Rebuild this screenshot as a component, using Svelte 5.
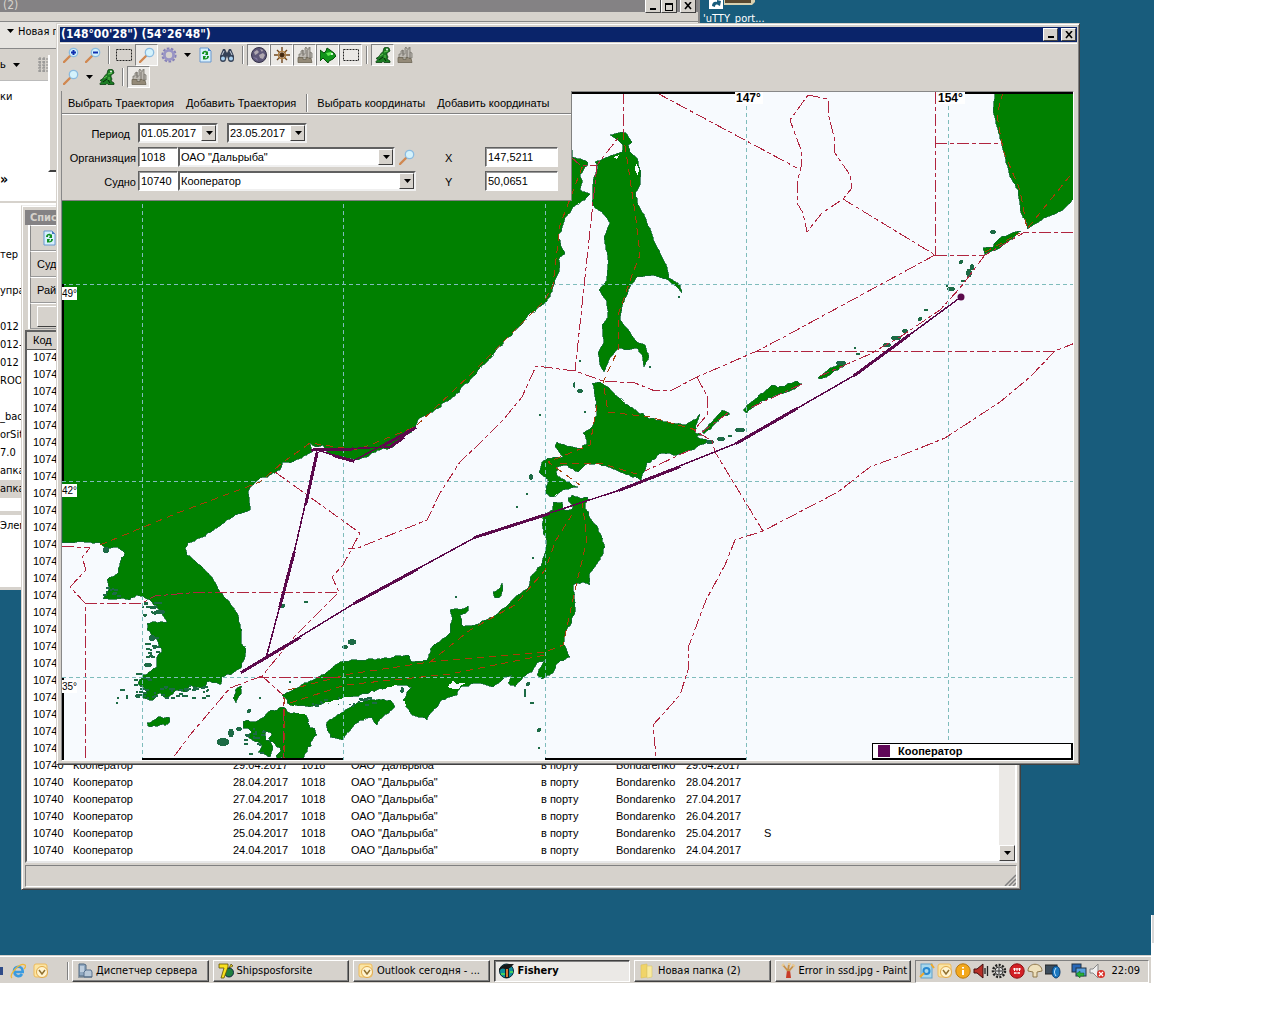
<script>
  const vessels = [];
  for (let i = 0; i < 30; i++) {
    const d = new Date(Date.UTC(2017, 4, 23 - i));
    const date = `${String(d.getUTCDate()).padStart(2, '0')}.${String(d.getUTCMonth() + 1).padStart(2, '0')}.2017`;
    vessels.push({ date, mark: date === '25.04.2017' ? 'S' : '' });
  }

  const folders = ['тер', '', 'упра', '', '012', '012-д', '012', 'ROOT', '', '_bac', 'orSit', '7.0', 'апка', 'апка'];

  const tasks = [
    { icon: 'server', text: 'Диспетчер сервера' },
    { icon: 'seven', text: 'Shipsposforsite' },
    { icon: 'outlook', text: 'Outlook сегодня - ...' },
    { icon: 'fishery', text: 'Fishery', active: true },
    { icon: 'folder', text: 'Новая папка (2)' },
    { icon: 'paint', text: 'Error in ssd.jpg - Paint' }
  ];

  const tools = [
    ['zoomin', 'Увеличить'], ['zoomout', 'Уменьшить'], ['sep'], ['rect', 'Выделить'],
    ['lens', 'Поиск', true], ['gear', 'Настройки'], ['drop', 'Ещё'], ['doc', 'Обновить'], ['binoc', 'Найти'], ['sep'],
    ['globe', 'Глобус', true], ['compass', 'Компас', true], ['city', 'Порты', true], ['fish', 'Рыба', true], ['rect', 'Районы', true],
    ['sep'], ['frog', 'Суда', true], ['city', 'Порт']
  ];
  const tools2 = [['lens', 'Лупа'], ['drop', 'Ещё'], ['frog', 'Суда'], ['sep'], ['city', 'Порты', true]];
  const tray = ['sync', 'outlook', 'info', 'sound', 'cog', 'red', 'mushroom', 'monitor', 'gap', 'net', 'mute'];

  // Breaks straight coast segments into small irregular steps.
  let seed = 7;
  const rnd = () => {
    seed = (seed * 16807) % 2147483647;
    return seed / 2147483647 - 0.5;
  };
  function coast(text, amp = 2) {
    const p = text.trim().split(/\s+/).map((s) => s.split(',').map(Number));
    let out = '';
    p.forEach((a, i) => {
      const b = p[(i + 1) % p.length];
      const len = Math.hypot(b[0] - a[0], b[1] - a[1]);
      const n = len > 90 ? 1 : Math.max(1, Math.round(len / 3));
      for (let k = 0; k < n; k++) {
        const j = k ? amp : 0;
        out += `${i || k ? 'L' : 'M'}${(a[0] + ((b[0] - a[0]) * k) / n + rnd() * j).toFixed(1)} ${(a[1] + ((b[1] - a[1]) * k) / n + rnd() * j).toFixed(1)}`;
      }
    });
    return out + 'Z';
  }

  const lands = [
    coast('62,150 572,150 572,157 583,160 588,163 585,167 583,171 580,175 582,183 580,190 590,194 585,200 573,207 565,218 562,228 558,238 562,248 565,254 560,257 559,270 555,283 550,297 545,303 530,313 520,326 505,340 495,352 487,362 480,368 470,380 455,396 445,402 433,412 420,418 415,428 403,438 390,448 377,450 370,455 357,460 337,457 327,453 323,445 316,447 310,443 312,452 302,458 290,463 282,462 280,470 270,475 258,480 248,492 250,510 233,517 217,528 203,537 188,543 185,548 187,555 200,565 212,577 220,592 230,603 238,615 242,630 241,643 246,648 242,667 233,673 222,677 221,684 207,682 203,689 190,685 187,692 176,690 167,698 160,693 153,700 143,698 146,690 138,683 143,675 157,667 157,657 162,652 157,640 147,630 147,623 167,622 160,610 150,600 137,595 130,600 123,598 103,599 110,588 107,580 118,573 120,563 125,553 117,547 107,550 100,543 90,542 77,542 62,543'),
    coast('610,135 622,132 627,134 632,142 628,145 630,152 637,158 641,173 640,185 636,192 637,202 645,217 655,243 667,267 669,278 680,285 682,293 678,288 668,280 653,275 637,277 630,287 622,307 620,320 630,332 637,342 645,345 649,357 644,367 642,355 637,348 627,350 618,348 610,358 604,372 600,365 598,353 604,342 602,325 608,317 607,302 599,290 607,280 608,260 604,237 610,223 602,212 592,205 593,180 598,167 595,162 608,157 622,152 623,145 618,140', 1),
    coast('592,383 600,382 613,392 630,407 647,417 667,422 683,425 693,420 700,414 697,423 695,432 702,435 697,437 712,442 700,445 692,450 677,455 663,453 647,463 641,480 623,473 608,467 597,463 585,465 578,472 567,465 557,467 557,475 567,482 578,487 563,490 552,497 545,493 548,480 539,472 542,462 548,458 563,457 555,447 557,442 567,446 582,448 587,442 583,433 592,427 597,413 595,397'),
    coast('553,502 562,502 565,510 573,508 568,498 572,495 580,498 588,497 585,505 590,518 598,528 605,547 600,560 590,573 590,585 583,582 573,585 575,607 572,622 565,632 563,643 570,657 558,663 553,673 542,679 537,675 545,660 537,663 532,672 523,677 515,687 508,683 512,675 505,677 493,687 477,683 460,688 457,695 442,700 432,712 427,720 412,715 403,702 407,692 412,687 400,685 377,690 360,695 340,700 323,703 310,707 290,705 282,695 297,688 313,680 327,672 340,662 357,660 387,658 408,655 412,662 427,660 432,647 450,633 452,617 450,610 462,609 468,606 468,611 460,615 462,625 470,626 493,617 512,600 528,588 530,577 542,563 547,543 543,533 543,515 553,510'),
    coast('327,722 335,717 343,712 357,703 370,700 390,700 395,707 383,717 377,725 372,718 360,720 352,728 343,740 330,737 327,728'),
    coast('243,722 248,720 255,722 267,713 282,707 290,713 307,713 307,723 317,735 308,747 303,759 277,759 280,748 270,742 272,734 263,730 266,740 273,747 268,757 258,752 262,745 256,742 248,737 252,732 243,728', 4),
    coast('995,92 993,110 998,130 1003,150 1010,177 1018,190 1021,213 1027,223 1027,229 1047,217 1063,210 1075,198 1075,92', 1),
    coast('983,248 993,247 1000,238 1010,234 1021,231 1010,240 1000,248 985,255'),
    coast('702,431 712,422 722,410 730,414 720,418 712,427 704,434'),
    coast('743,410 757,398 772,385 778,388 797,381 802,384 790,391 777,395 760,402 747,413'),
    coast('818,378 830,368 845,362 845,365 830,375 820,379'),
    coast('493,592 500,588 502,583 503,590 501,596 495,598'),
    coast('237,688 242,686 241,694 236,703 233,698'),
    coast('147,723 158,717 170,718 168,724 150,727')
  ];
  const waters = [
    coast('289,707 300,706 318,708 332,706 338,709 326,716 318,722 308,716 296,713'),
    coast('383,689 396,685 401,688 396,696 385,694'),
    coast('448,687 453,679 456,684 466,683 458,689'),
    coast('322,703 334,700 350,697 360,701 344,705'),
    coast('636,163 639,169 638,176 635,170', 0),
    coast('613,157 619,155 617,159', 0),
    coast('397,702 405,701 406,706 400,709')
  ];
  // cx, cy, rx, ry
  const islets = [
    [352, 642, 4, 3], [345, 647, 3, 2], [283, 606, 2, 2], [531, 477, 2, 3], [580, 391, 3, 2], [574, 385, 1, 3], [580, 361, 1, 1],
    [740, 430, 5, 2], [721, 439, 4, 2], [710, 442, 4, 2], [730, 436, 2, 1], [993, 232, 3, 2], [961, 262, 2, 2], [969, 273, 3, 4], [972, 267, 2, 3],
    [963, 281, 2, 1], [951, 289, 4, 2], [947, 286, 1, 1], [926, 310, 2, 1], [920, 319, 2, 2], [905, 331, 3, 2], [896, 338, 5, 2], [887, 345, 4, 2],
    [858, 354, 2, 1], [855, 348, 1, 1], [841, 363, 5, 2], [528, 684, 2, 2], [525, 693, 1, 4], [532, 703, 2, 1], [539, 730, 2, 2], [539, 748, 1, 1],
    [527, 494, 1, 1], [533, 558, 1, 1], [517, 507, 1, 1], [456, 597, 1, 1], [540, 415, 1, 1], [585, 412, 1, 1], [223, 742, 6, 4], [231, 733, 3, 4],
    [239, 729, 3, 2], [249, 711, 2, 2], [118, 698, 1, 1], [122, 690, 3, 1], [127, 697, 1, 2], [117, 703, 1, 1], [260, 698, 1, 1], [150, 607, 5, 1],
    [158, 603, 4, 1], [160, 612, 5, 2], [146, 603, 2, 1], [152, 638, 3, 3], [155, 647, 2, 2], [148, 665, 4, 2], [106, 550, 3, 3], [290, 682, 1, 1],
    [402, 690, 2, 3], [650, 367, 1, 1], [679, 297, 1, 1]
  ];
  // Small skerries: centre, spread, count
  for (const [x, y, w, h, n] of [[143, 685, 14, 26, 22], [180, 692, 60, 12, 34], [153, 610, 20, 16, 14], [152, 648, 12, 24, 14], [340, 702, 70, 8, 30], [256, 742, 20, 26, 16], [308, 600, 6, 4, 1], [112, 592, 14, 10, 9]]) {
    for (let i = 0; i < n; i++) islets.push([Math.round(x + rnd() * w), Math.round(y + rnd() * h), 1 + Math.round(Math.abs(rnd()) * 3), 1]);
  }
  const zones = [
    'M623 92V133', 'M657 93L797 168', 'M808 95L828 99L829 117L834 137L835 153L850 175L852 188L843 199L822 213L807 232L803 213L797 203V183L802 163L801 150L790 120Z',
    'M843 199L935 255M935 92V255M935 143H1003M935 255H985L1025 232H1075',
    'M935 255L782 338L757 351L697 377L672 390L655 391L635 383L603 381L575 371L536 366L522 397L503 420L480 443L460 462L440 493L427 520L358 548L348 549',
    'M275 472L360 533L343 565L332 577L339 592L295 636L262 676L283 695L284 758',
    'M757 351H1055M1075 343L1055 351L1030 377L1000 402L945 438L910 452L870 467L838 492L763 531L735 540L725 565L706 600L688 648V670L680 695L653 725L656 757',
    'M697 377L708 398L707 415L694 430L712 441L715 452L763 531',
    'M597 165L575 371M571 157L580 165H597L618 138',
    'M85 758V603L70 587L86 570L82 557L90 548L62 546M85 603H142L155 596L200 592H339',
    'M257 677H340M262 676L230 688L190 735L173 758',
    'M985 255L960 288L940 310L900 337L870 354L820 376M802 384L750 408M728 413L702 432M690 450L645 471'
  ];
  const inland = [
    'M100 545L180 512L260 482L282 463L310 443L357 450L415 427L470 375L545 300L553 285L560 225L583 165',
    'M623 133L628 165L636 220L640 255L632 275L618 315L619 348L603 382L608 412L650 417L696 430',
    'M597 405L590 445L548 462L580 485M560 463L600 463L640 475',
    'M288 690L350 674L430 662L545 652L563 645L575 590L587 540L582 500',
    'M430 662L470 630L515 605L545 570L556 540L575 510',
    'M290 703L345 685L450 674L545 655',
    'M284 697L285 758M1003 92L997 115L1003 150L1020 190L1027 229L1073 172M985 252L1020 233'
  ];
  const track = [
    [961, 297, 855, 375], [855, 375, 737, 443], [737, 443, 620, 490], [620, 490, 476, 537], [476, 537, 355, 603], [355, 603, 242, 672],
    [266, 658, 294, 553], [294, 553, 317, 453], [317, 450, 353, 461], [353, 461, 415, 428], [415, 428, 390, 447], [390, 447, 313, 450]
  ];
  const mid = (a, b, t) => Math.round(a + (b - a) * t);
</script>

{#snippet icon(name)}
  <svg class="icon" viewBox="0 0 16 16" aria-hidden="true">
    {#if name === 'zoomin' || name === 'zoomout' || name === 'lens'}
      <path d="M1 15L7 9" stroke="#d08850" stroke-width="2.4" stroke-linecap="round" />
      <circle cx="10.5" cy="5.5" r="4.2" fill="#d4f2fc" stroke="#8bbbe0" stroke-width="1.3" />
      {#if name === 'zoomin'}<path d="M8 5.5h5M10.5 3v5" stroke="#1030b0" stroke-width="2" />{/if}
      {#if name === 'zoomout'}<path d="M8 5.5h5" stroke="#1030b0" stroke-width="2" />{/if}
    {:else if name === 'rect'}
      <rect x=".5" y="2.500" width="15" height="11" fill="none" stroke="#222" stroke-dasharray="2 1" />
    {:else if name === 'gear'}
      <circle cx="8" cy="8" r="6.6" fill="none" stroke="#8580b8" stroke-width="2" stroke-dasharray="2.6 1.5" />
      <circle cx="8" cy="8" r="4.6" fill="none" stroke="#9894c4" stroke-width="2.8" />
    {:else if name === 'doc'}
      <path d="M3 1h8l3 3v11H3z" fill="#d8f0fc" stroke="#6898d0" /><path d="M11 1v3h3z" fill="#4878c0" />
      <path d="M5 7c0-4 5-4 5-2l1-1v4H8l1-2c-1-1-2-1-2 1zM12 9c0 4-5 4-5 3l-1 1V9h3l-1 2c2 1 2-1 2-2z" fill="#109020" />
    {:else if name === 'binoc'}
      <path d="M4 2h2l2 4 2-4h2l3 7v3a3 3 0 0 1-6 0l-1-3-1 3a3 3 0 0 1-6 0V9z" fill="#354258" />
      <circle cx="4" cy="11.5" r="2" fill="#a8d0f0" /><circle cx="12" cy="11.5" r="2" fill="#a8d0f0" />
      <path d="M5 4l-2 4M11 4l2 4" stroke="#c8d0dc" />
    {:else if name === 'globe'}
      <circle cx="8" cy="8" r="7.5" fill="#5e5878" stroke="#333048" />
      <path d="M3 5l3-2 2 2-2 2-2 1zM8 8l4-2 2 2-2 4-3-1zM9 2l3 1-1 2z" fill="#b0a8b0" />
      <path d="M2 10l4 1 1 3z" fill="#8078a0" />
    {:else if name === 'compass'}
      <path d="M8 0v16M0 8h16M3 3l10 10M13 3L3 13" stroke="#70451c" stroke-width="1.4" />
      <circle cx="8" cy="8" r="4" fill="none" stroke="#b88848" /><circle cx="8" cy="8" r="2" fill="#402810" />
    {:else if name === 'city'}
      <path d="M2 11V7h2V4l2-1v4h2V1l1-1 1 2h2V0h1v5l2 1v5z" fill="#bdb9b2" stroke="#77736c" stroke-width=".8" />
      <path d="M1 15.500v-5h5v2h3v-2h2l1 1h2l1 4z" fill="#948a78" stroke="#6c6454" stroke-width=".8" /><path d="M6 3v6M10 3v7M13 5v6" stroke="#76726c" />
    {:else if name === 'fish'}
      <path d="M0 3l4 3 2-2 1-3 3 2 4 3 2 3-3 3-4 2-1 2-2-2-3-3-3 3z" fill="#11951b" stroke="#034d08" />
      <path d="M6 6l5-1 2 2-5 2z" fill="#60e850" /><circle cx="12" cy="7" r="1" fill="#fff" />
    {:else if name === 'frog'}
      <path d="M9 1l2-1 3 1 1 3-3 2 0 2 1 2-1 2 3 2v1.500H9l-1-1-1 1H1v-1l2-2-2-1 3-2 2-3 2-2z" fill="#1b7d22" stroke="#0a3c10" stroke-width=".8" />
      <path d="M9 5l4-1M5 9l3-2M10 8v3" stroke="#62c452" /><circle cx="12" cy="2.500" r=".9" fill="#fff" /><path d="M4 13l4-3M9 11l2 3" stroke="#052808" />
    {:else if name === 'drop'}
      <path d="M5 6h7l-3.500 4z" fill="#000" />
    {:else if name === 'server'}
      <path d="M2 1h5l2 1v11H2z" fill="#90a8c0" stroke="#506880" /><path d="M3 4h4M3 6h4M3 8h4" stroke="#e8f0f8" />
      <path d="M7 9l2-2h5l1 2v5H7z" fill="#b8c8d8" stroke="#58708c" /><path d="M1 14h14" stroke="#506880" />
    {:else if name === 'seven'}
      <circle cx="11" cy="9.500" r="4.500" fill="#208040" stroke="#102840" />
      <path d="M1 1h9v3L6 15H3L6 5H1z" fill="#f8e020" stroke="#605000" stroke-width=".8" /><path d="M11 5l2-4 2 2z" fill="#e8d020" stroke="#302800" stroke-width=".6" />
    {:else if name === 'outlook'}
      <rect x="1" y="1" width="13" height="13" rx="2" fill="#fbe5a4" stroke="#eebb5c" />
      <circle cx="9" cy="9" r="5.500" fill="#fff4d0" stroke="#e0a848" /><path d="M6 7l3 4 3-4" fill="none" stroke="#907030" stroke-width="1.500" />
    {:else if name === 'fishery'}
      <circle cx="7.500" cy="8" r="7" fill="#0b8f9c" stroke="#082838" />
      <path d="M0 6c5-6 9-5 15-5l-4 4h-1v10H6V6c-2-1-4-1-6 2z" fill="#181818" /><path d="M7 6h2v8H7z" fill="#d87838" /><path d="M2 11h4M11 9h3" stroke="#40d060" stroke-width="2" />
    {:else if name === 'folder'}
      <path d="M2 2l6-1v13l-6 1z" fill="#f0d468" stroke="#dcc058" stroke-width=".6" /><path d="M8 3h5v11l-5 1z" fill="#f8eaa0" stroke="#dcc868" stroke-width=".6" />
    {:else if name === 'paint'}
      <path d="M7 7h3l1 8H6z" fill="#c83c28" /><path d="M8 8L3 2M8 8l1-7M9 8l5-6" stroke="#c89048" stroke-width="1.800" /><path d="M2 3l2-2M8 1h3M12 2l3 1" stroke="#e8c890" stroke-width="2" />
    {:else if name === 'ie'}
      <path d="M14 9H4.500a4 4 0 0 0 7.500 2" fill="none" stroke="#3a9be0" stroke-width="2.600" /><path d="M4 8a4.300 4.300 0 0 1 8.600 0" fill="none" stroke="#3a9be0" stroke-width="2.600" />
      <path d="M2 15C-2 12 10-1 15 2c1 1 0 3-1 4" fill="none" stroke="#f0b838" stroke-width="1.300" />
    {:else if name === 'sync'}
      <rect x="2" y="1" width="11" height="14" fill="#a8d8ec" stroke="#60a0c8" /><circle cx="7.500" cy="8" r="3" fill="none" stroke="#2888d0" stroke-width="2" /><path d="M1 14l4-4M12 1l3 4" stroke="#f0a828" stroke-width="2" />
    {:else if name === 'info'}
      <circle cx="8" cy="8" r="7.200" fill="#f3a81c" stroke="#b87810" /><path d="M8 7v5M8 4v1.500" stroke="#fff" stroke-width="2" />
    {:else if name === 'sound'}
      <path d="M1 6h3l6-5v14l-6-5H1z" fill="#b83028" stroke="#401010" /><path d="M12 5v6M14.500 3v10" stroke="#222" stroke-width="1.300" />
    {:else if name === 'cog'}
      <circle cx="8" cy="8" r="6" fill="none" stroke="#222" stroke-width="2.500" stroke-dasharray="2 1.400" /><circle cx="8" cy="8" r="4" fill="#ddd" stroke="#333" /><path d="M8 5v6M5 8h6" stroke="#333" />
    {:else if name === 'red'}
      <circle cx="8" cy="8" r="7.200" fill="#d32026" stroke="#8c1014" /><path d="M4 6h8M5 10h6M5.500 5v3M8 5v3M10.500 5v3M6 9v2M10 9v2" stroke="#fff" />
    {:else if name === 'mushroom'}
      <path d="M1 8c0-9 14-9 14 0l-5 1v5H6V9z" fill="#eee0bc" stroke="#90784c" />
    {:else if name === 'monitor'}
      <rect x="0" y="2" width="12" height="9" fill="#3c4c5c" stroke="#222" /><ellipse cx="11" cy="9" rx="4" ry="6" fill="#1c78c0" stroke="#0c3c70" /><path d="M11 5c-2 3-2 5 0 8" stroke="#c8e8ff" fill="none" />
    {:else if name === 'net'}
      <rect x="1" y="1" width="9" height="8" fill="#2868b8" stroke="#234" /><rect x="5" y="5" width="10" height="8" fill="#58a0e0" stroke="#234" /><path d="M5 11l4-3v2h4v3H9v2z" fill="#28b038" stroke="#0c5c18" stroke-width=".5" />
    {:else if name === 'mute'}
      <path d="M1 6h3l5-5v14l-5-5H1z" fill="#eee" stroke="#888" /><circle cx="12" cy="11" r="4" fill="#d83028" /><path d="M10 9l4 4M14 9l-4 4" stroke="#fff" stroke-width="1.300" />
    {/if}
  </svg>
{/snippet}

{#snippet toolrow(list)}
  <div class="toolrow">
    {#each list as [name, label, on]}
      {#if name === 'sep'}
        <span class="sep"></span>
      {:else}
        <button class="tool" class:on class:narrow={name === 'drop'} aria-label={label}>{@render icon(name)}</button>
      {/if}
    {/each}
  </div>
{/snippet}

{#snippet combo(id, label, value)}
  <span class="combo">
    <select {id} aria-label={label}><option>{value}</option></select>
    <span class="arrow">{@render icon('drop')}</span>
  </span>
{/snippet}

<div class="screen">
  <main class="desktop">
    <div class="shortcut">
      <svg viewBox="0 0 46 12" aria-hidden="true"><path d="M15 0h31v2l-3 3H15z" fill="#d8d0b0" /><path d="M16 0h26v3H16z" fill="#5a4830" /><path d="M0 0h14v9H0z" fill="#fff" /><path d="M3 6c0-4 3-5 5-4V0l4 1-1 5-2-1c-2-1-3 0-3 2z" fill="#185c7c" /></svg>
      <span>'uTTY_port...</span>
    </div>

    <section class="explorer">
      <header class="graybar"><span>(2)</span>
        <span class="winbtns"><button aria-label="Свернуть"><i class="min"></i></button><button aria-label="Развернуть"><i class="max"></i></button><button aria-label="Закрыть окно"><svg viewBox="0 0 8 8" aria-hidden="true"><path d="M1 0l6 7M7 0L1 7" stroke="#000" stroke-width="1.600" /></svg></button></span>
      </header>
      <div class="address">{@render icon('drop')}<span>Новая г</span></div>
      <div class="exbar"><span>ь</span>{@render icon('drop')}
        <svg class="lines" viewBox="0 0 14 16" aria-hidden="true"><path d="M2 0v16M6 0v16M0 2h14M0 5h14M0 8h14M0 11h14M0 14h14" stroke="#888" stroke-dasharray="3 1" /></svg>
      </div>
      <div class="side top"><span>ки</span><b>»</b></div>
      <div class="side list">
        {#each folders as f, i}<span class:picked={i === 13}>{f}</span>{/each}
      </div>
      <div class="side foot"><span>Элем</span></div>
    </section>

    <section class="behind"></section>

    <section class="register">
      <header class="graybar">Спис</header>
      <div class="band">{@render icon('doc')}</div>
      <div class="band">Суд</div>
      <div class="band">Рай</div>
      <div class="band"><button class="blank" aria-label="Фильтр"></button></div>
      <div class="grid">
        <table>
          <thead><tr><th class="c1">Код</th><th class="c2">Судно</th><th class="c3">Дата</th><th class="c4">Код</th><th class="c5">Организация</th><th class="c6">Район</th><th class="c7">Автор</th><th class="c8">Дата</th><th></th></tr></thead>
          <tbody>
            {#each vessels as v}
              <tr><td>10740</td><td>Кооператор</td><td>{v.date}</td><td>1018</td><td>ОАО "Дальрыба"</td><td>в порту</td><td>Bondarenko</td><td>{v.date}</td><td>{v.mark}</td></tr>
            {/each}
          </tbody>
        </table>
        <div class="scroll"><button aria-label="Вниз">{@render icon('drop')}</button></div>
      </div>
      <footer class="status"><svg viewBox="0 0 12 12" aria-hidden="true"><path d="M1 12L12 1M5 12l7-7M9 12l3-3" stroke="#808080" stroke-width="1.500" /></svg></footer>
    </section>

    <section class="fishery">
      <header class="titlebar"><span>(148°00'28") (54°26'48")</span>
        <span class="winbtns"><button aria-label="Свернуть карту"><i class="min"></i></button><button aria-label="Закрыть карту"><svg viewBox="0 0 8 8" aria-hidden="true"><path d="M1 0l6 7M7 0L1 7" stroke="#000" stroke-width="1.600" /></svg></button></span>
      </header>
      <div class="toolbars">
        {@render toolrow(tools)}
        {@render toolrow(tools2)}
      </div>
      <div class="mapbox">
        <svg class="map" viewBox="62 92 1013 668" preserveAspectRatio="xMinYMin slice" role="img" aria-label="Карта траектории судна">
          <rect x="62" y="92" width="1013" height="668" fill="#f7fafe" />
          <g shape-rendering="crispEdges">
            <g fill="#008000" stroke="#14673a" stroke-width=".7">
              {#each lands as d}<path {d} />{/each}
            </g>
            <g fill="#1c6a45">{#each islets as [cx, cy, rx, ry]}<ellipse {cx} {cy} {rx} {ry} />{/each}</g>
            <g fill="#f7fafe">{#each waters as d}<path {d} />{/each}</g>
            <path d="M142.500 92V760M343.500 92V760M545.500 92V760M746.500 92V760M948.500 92V760M62 284.500H1075M62 481.500H1075M62 677.500H1075" stroke="#7fbcbc" stroke-dasharray="4 3" fill="none" />
            <g class="zone">{#each zones as d}<path {d} />{/each}</g>
            <g class="zone land">{#each inland as d}<path {d} />{/each}</g>
            <path d="M62 93H736M965 93H1075M63 284V481M63 678V760M1074 284V481M1074 678V760M142 759H343M545 759H746M948 759H1075" stroke="#000" stroke-width="2" fill="none" />
          </g>
          <g stroke="#5c0a4c" stroke-linecap="square" shape-rendering="crispEdges">
            {#each track as [x1, y1, x2, y2]}
              <line {x1} {y1} {x2} {y2} stroke-width="1.500" />
              <line x1={x2} y1={y2} x2={mid(x2, x1, 0.5)} y2={mid(y2, y1, 0.5)} stroke-width="3" />
            {/each}
          </g>
          <circle cx="961" cy="297" r="3.500" fill="#5c0a4c" />
          <g fill="#fff"><rect x="62" y="287" width="15" height="13" /><rect x="62" y="484" width="15" height="13" /><rect x="62" y="680" width="15" height="13" /><rect x="735" y="92" width="28" height="12" /><rect x="938" y="92" width="27" height="12" /></g>
          <g class="deg"><text x="62" y="297">49°</text><text x="62" y="494">42°</text><text x="62" y="690">35°</text></g>
          <g class="deg bold"><text x="736" y="102">147°</text><text x="938" y="102">154°</text></g>
        </svg>

        <form class="panel" onsubmit={(e) => e.preventDefault()}>
          <div class="links">
            <button>Выбрать Траектория</button><button>Добавить Траектория</button><span class="sep"></span><button>Выбрать координаты</button><button>Добавить координаты</button>
          </div>
          <div class="fields">
            <label class="near" for="from">Период</label>
            <div class="dates">{@render combo('from', 'Начало периода', '01.05.2017')}{@render combo('to', 'Конец периода', '23.05.2017')}</div>
            <span></span><span></span>
            <label for="org">Организяция</label>
            <div class="pair org"><input id="org" value="1018" />{@render combo('orgname', 'Название организации', 'ОАО "Дальрыба"')}<button class="find" aria-label="Найти организацию">{@render icon('lens')}</button></div>
            <label class="xy" for="x">X</label><input class="coord" id="x" value="147,5211" />
            <label for="ship">Судно</label>
            <div class="pair"><input id="ship" value="10740" />{@render combo('shipname', 'Название судна', 'Кооператор')}</div>
            <label class="xy" for="y">Y</label><input class="coord" id="y" value="50,0651" />
          </div>
        </form>
        <div class="legend"><i></i><b>Кооператор</b></div>
      </div>
    </section>
    <div class="edge"></div>
  </main>

  <nav class="taskbar">
    <div class="quick"><i></i>{@render icon('ie')}{@render icon('outlook')}</div>
    <span class="sep"></span>
    <div class="tasks">
      {#each tasks as t}<button class:active={t.active}>{@render icon(t.icon)}<span>{t.text}</span></button>{/each}
    </div>
    <div class="tray">
      {#each tray as t}{#if t === 'gap'}<span class="gap"></span>{:else}{@render icon(t)}{/if}{/each}
      <time>22:09</time>
    </div>
  </nav>
</div>

<style>
  :global(body) { background: #fff; overflow-x: hidden; }
  .screen, .screen * { box-sizing: border-box; }
  .screen {
    width: calc(100% - 126px);
    font: 11px/13px 'Liberation Sans', sans-serif;
    color: #000;
  }
  button, input, select { font: inherit; color: inherit; border-radius: 0; padding: 0; margin: 0; }
  button { background: none; border: 0; }
  .icon { width: 16px; height: 16px; flex: none; fill: none; display: block; }
  .desktop { position: relative; height: calc(100vh - 69px); min-height: 900px; background: #185c7c; overflow: hidden; }
  .shortcut { position: absolute; left: 703px; top: 0; color: #fff; font: 11px/13px 'DejaVu Sans Condensed', sans-serif; }
  .shortcut svg { width: 46px; height: 12px; display: block; margin-left: 6px; }
  .edge { position: absolute; right: 0; bottom: 0; width: 3px; height: 40px; border-bottom: 12px solid #fff; border-left: 1px solid #fff; background: #d8d8d8; }

  .explorer { position: absolute; left: 0; top: 0; width: 700px; height: 590px; background: #d6d2cc; border-right: 2px solid #888; border-bottom: 2px solid #d6d2cc; display: flex; flex-direction: column; }
  .graybar { background: #848284; color: #d6d2cc; font: bold 11px/13px 'DejaVu Sans Condensed', sans-serif; }
  .explorer .graybar { height: 14px; padding: 0 2px 0 3px; font-weight: normal; font-size: 12px; line-height: 11px; display: flex; justify-content: space-between; border-bottom: 2px solid #d6d2cc; flex: none; }
  .winbtns { display: flex; align-items: center; }
  .winbtns button { width: 16px; height: 14px; background: #d6d2cc; border: 1px solid; border-color: #fff #404040 #404040 #fff; display: flex; align-items: end; justify-content: center; }
  .winbtns button:last-child { margin-left: 3px; align-items: center; }
  .winbtns svg { width: 8px; height: 8px; }
  .min { width: 6px; height: 2px; background: #000; margin-bottom: 2px; }
  .max { width: 8px; height: 8px; border: 1px solid #000; border-top-width: 2px; margin-bottom: 1px; }
  .address { height: 28px; margin-top: 7px; border-top: 1px solid #888; border-bottom: 1px solid #888; background: #e6e4e0; display: flex; align-items: center; font: 11px/13px 'DejaVu Sans Condensed', sans-serif; }
  .explorer .address { padding-left: 2px; padding-bottom: 8px; flex: none; }
  .exbar { height: 32px; flex: none; display: flex; align-items: center; gap: 2px; border-bottom: 1px solid #bbb; }
  .lines { width: 14px; height: 16px; margin-left: 12px; }
  .side { background: #fff; width: 100%; font: 11px/18px 'DejaVu Sans Condensed', sans-serif; display: flex; flex-direction: column; white-space: nowrap; flex: none; }
  .side.top { height: 122px; padding-top: 7px; justify-content: space-between; padding-bottom: 13px; border-bottom: 2px solid #d6d2cc; }
  .side.top b { font-size: 14px; }
  .side.list { height: 308px; padding-top: 43px; }
  .side.list span { height: 18px; flex: none; }
  .side.list .picked { background: #d6d2cc; }
  .side.foot { height: 76px; border-top: 4px solid #d6d2cc; padding-top: 2px; }
  .behind { position: absolute; left: 48px; top: 55px; width: 60px; height: 117px; background: #d6d2cc; border-left: 2px solid #fff; border-bottom: 2px solid #404040; }

  .register { position: absolute; left: 21px; top: 205px; right: 133px; bottom: 65px; background: #d6d2cc; border: 1px solid; border-color: #eee #404040 #404040 #d6d2cc; box-shadow: inset 1px 1px #fff, inset -1px -1px #808080; padding: 4px 3px 2px; display: flex; flex-direction: column; }
  .register .graybar { height: 15px; padding-left: 5px; line-height: 15px; flex: none; }
  .band { height: 26px; flex: none; border-top: 1px solid #fff; border-bottom: 1px solid #999; margin-left: 5px; padding-left: 6px; display: flex; align-items: center; border-left: 1px solid #888; box-shadow: -2px 0 #fff; }
  .band .icon { margin-left: 4px; }
  .blank { width: 60px; height: 21px; border: 1px solid; border-color: #fff #404040 #404040 #fff; }
  .grid { flex: 1; min-height: 0; margin-top: 1px; display: flex; background: #fff; border: 2px solid; border-color: #606060 #fff #e8e8e8 #606060; overflow: hidden; align-items: stretch; }
  table { border-collapse: collapse; table-layout: fixed; width: 100%; align-self: flex-start; }
  th, td { height: 17px; padding: 0; text-align: left; font-weight: normal; white-space: nowrap; line-height: 13px; }
  th { background: #d6d2cc; border-bottom: 1px solid #555; }
  th:first-child, td:first-child { padding-left: 6px; }
  .c1 { width: 46px; } .c2 { width: 160px; } .c3 { width: 68px; } .c4 { width: 50px; } .c5 { width: 190px; } .c6 { width: 75px; } .c7 { width: 70px; } .c8 { width: 78px; }
  .scroll { width: 16px; flex: none; display: flex; align-items: flex-end; background: #ebe9e6; }
  .scroll button { width: 16px; height: 16px; background: #d6d2cc; border: 1px solid; border-color: #fff #404040 #404040 #fff; display: flex; align-items: center; justify-content: center; }
  .status { height: 22px; flex: none; margin-top: 2px; border: 1px solid; border-color: #808080 #fff #fff #808080; display: flex; justify-content: flex-end; align-items: flex-end; }
  .status svg { width: 12px; height: 12px; }

  .fishery { position: absolute; left: 56px; top: 23px; right: 74px; bottom: 190px; background: #d6d2cc; border: 1px solid; border-color: #d6d2cc #404040 #404040 #d6d2cc; box-shadow: inset 1px 1px #fff, inset -1px -1px #808080; padding: 3px 2px 3px 3px; display: flex; flex-direction: column; }
  .titlebar { height: 15px; flex: none; background: #0a246a; color: #fff; font: bold 12px/15px 'DejaVu Sans Condensed', sans-serif; display: flex; justify-content: space-between; padding-left: 1px; }
  .titlebar > span:first-child { white-space: pre; }
  .titlebar .winbtns { padding-right: 1px; }
  .titlebar .winbtns button { width: 15px; height: 13px; }
  .toolbars { margin-top: 1px; border-top: 1px solid #fff; height: 48px; flex: none; }
  .toolrow { display: flex; height: 22px; align-items: center; }
  .tool { width: 22px; height: 22px; flex: none; display: flex; align-items: center; justify-content: center; border: 1px solid transparent; }
  .tool.narrow { width: 14px; }
  .tool.on { width: 23px; border-color: #808080 #fff #fff #808080; background: #ebe9e6; }
  .sep { width: 9px; height: 18px; flex: none; display: block; background: linear-gradient(#808080, #808080) 4px 0 / 1px 100% no-repeat, linear-gradient(#fff, #fff) 5px 0 / 1px 100% no-repeat; }
  .mapbox { position: relative; flex: 1; min-height: 0; border: 1px solid; border-color: #888 #fff #fff #888; margin: 0 3px 0 1px; }
  .map { display: block; width: 100%; height: 100%; }
  .zone path { fill: none; stroke: #b0243f; stroke-width: 1; stroke-dasharray: 12 3 4 3; }
  .zone.land path { stroke: #a83c08; stroke-dasharray: 7 5; }
  .deg text { font: 10px 'Liberation Sans', sans-serif; }
  .deg.bold text { font-weight: bold; font-size: 12px; }

  .panel { position: absolute; left: 0; top: -1px; width: 510px; background: #d6d2cc; border-right: 1px solid #808080; border-bottom: 1px solid #808080; padding-bottom: 7px; }
  .links { display: flex; align-items: center; height: 23px; padding: 2px 0 0 6px; gap: 12px; border-bottom: 1px solid #808080; box-shadow: 0 1px #fff; white-space: nowrap; }
  .links .sep { margin: 0 -6px; }
  .fields { display: grid; grid-template-columns: 74px 301px 42px 73px; grid-auto-rows: 24px; column-gap: 2px; align-items: center; padding-top: 7px; }
  .fields label { text-align: right; padding-top: 2px; }
  .fields label.near { padding-right: 6px; }
  .fields label.xy { text-align: left; padding-left: 4px; }
  .dates, .pair { display: flex; align-items: center; }
  .dates { gap: 9px; }
  .dates .combo { width: 80px; }
  .pair .combo { width: 238px; }
  .pair.org .combo { width: 217px; }
  .fields input { height: 20px; width: 40px; background: #fff; border: 1px solid; border-color: #606060 #fff #fff #606060; box-shadow: inset 1px 1px #999; padding: 0 2px; outline: 0; }
  .fields input.coord { width: 73px; }
  .combo { display: flex; height: 20px; background: #fff; border: 2px solid; border-color: #606060 #f0f0f0 #f0f0f0 #606060; }
  .combo select { flex: 1; min-width: 0; appearance: none; border: 0; background: #fff; padding-left: 1px; outline: 0; }
  .arrow { width: 15px; background: #d6d2cc; border: 1px solid; border-color: #fff #404040 #404040 #fff; display: flex; align-items: center; justify-content: center; overflow: hidden; pointer-events: none; }
  .find { margin-left: 4px; }
  .legend { position: absolute; right: 0; bottom: 0; width: 201px; height: 17px; background: #fff; border: 1px solid #000; border-bottom-width: 2px; border-right-width: 2px; display: flex; align-items: center; padding-left: 5px; gap: 8px; }
  .legend i { width: 12px; height: 12px; background: #600858; }

  .taskbar { margin-right: 3px; height: 28px; background: #d6d2cc; border-top: 1px solid #d6d2cc; box-shadow: inset 0 1px #fff; padding-top: 3px; display: flex; align-items: center; font: 11px/14px 'DejaVu Sans Condensed', sans-serif; }
  .quick { display: flex; align-items: center; gap: 7px; width: 63px; flex: none; }
  .quick i { width: 3px; height: 8px; background: #304c88; }
  .tasks { flex: 1; display: grid; grid-template-columns: repeat(6, 1fr); gap: 4px; min-width: 0; }
  .tasks button { height: 22px; display: flex; align-items: center; gap: 3px; padding: 0 4px; border: 1px solid; border-color: #fff #404040 #404040 #fff; box-shadow: inset -1px -1px #808080; white-space: nowrap; overflow: hidden; min-width: 0; }
  .tasks button.active { background: #ebe9e6; font-weight: bold; border-color: #404040 #fff #fff #404040; box-shadow: inset 1px 1px #808080; }
  .tray { display: flex; align-items: center; gap: 2px; height: 23px; width: 234px; flex: none; margin: 0 2px 0 4px; padding: 0 8px 0 3px; border: 1px solid; border-color: #808080 #fff #fff #808080; }
  .tray .gap { width: 6px; }
  .tray time { margin-left: auto; }
</style>
